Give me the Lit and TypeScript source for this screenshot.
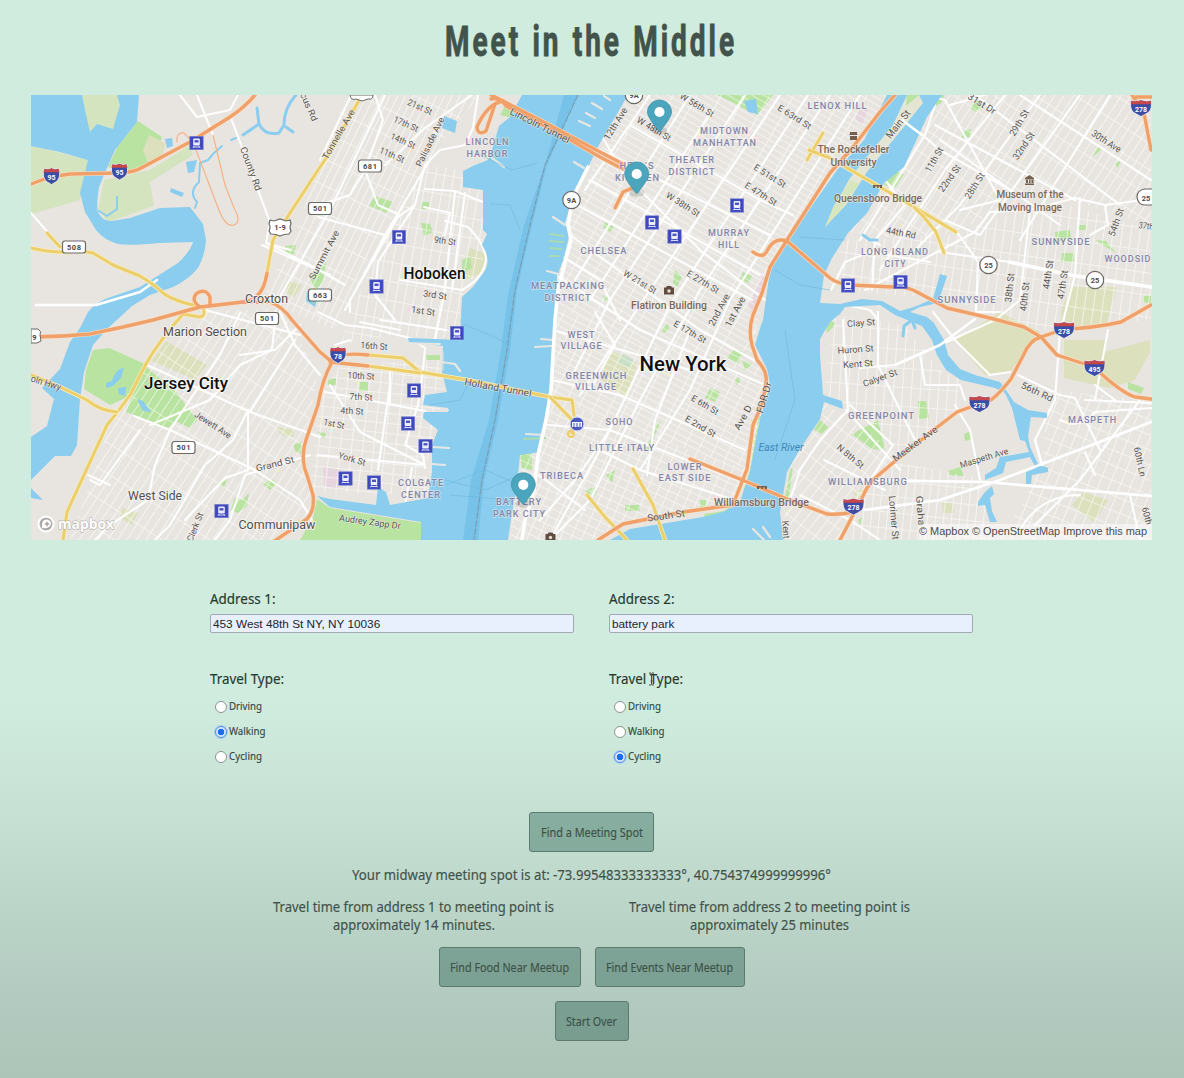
import { LitElement, html, svg, css } from "lit";
import { customElement, property, state } from "lit/decorators.js";

type Label = [string, number, number, number, number, number];

const WATER = "#8acdee";
const PARK = "#b9e3a0";
const OLIVE = "#dce0bd";

const waters = [
  // Hackensack river
  "M31 95H139L137 122L115 150L107 168L99 187Q96 206 98 212Q103 222 112 221L130 218L160 208L190 207L203 224L206 240Q205 256 198 268Q188 280 173 287L150 295L132 306L118 319L107 329L93 345L84 372L80 399L77 445L71 456L55 456L31 480V437L47 426L54 399L42 388L60 369L70 342L80 328L88 312Q96 302 108 298L140 287L178 263Q190 252 193 242L160 243Q130 246 118 244Q104 240 96 230L85 212L80 193L88 160L60 152L31 146Z",
  // Hudson
  "M522 95L510 117L499 126L492 150L488 160L475 165L463 171V187L483 190V230L487 234L482 245Q492 260 484 272L473 287L462 297L460 340L408 338L409 342L443 346L442 372L447 392L425 395L423 405L448 408V412L424 412L423 418L438 430L432 445V472L428 498L390 505L386 492L378 487L376 505L330 499L317 496L330 507L421 522V540H508L511 519L517 485L520 455L540 452L547 419L551 389L555 320L557 277L563 260L570 233L565 223L573 197L588 167L600 143L628 95Z",
  // East river
  "M887 95L864 140L837 170L790 237L770 270L763 320L761 325L755 345L767 369L770 385L760 419L750 472L740 502L723 512L703 517L630 529L610 540H783L780 512L787 472L800 449L820 419L824 402L843 409L842 401L823 395L820 355V339L830 322L840 314L845 307L880 305L895 315L912 322L922 326L932 340L937 355L946 370L961 380L995 388L1005 393L1012 408L1020 440L1025 441L1029 452L1000 457L996 468L985 475V480L1003 473L1006 462L1030 457L1036 468L1026 472V484H1031L1032 475L1048 472V468L1038 464L1030 447L1028 436L1031 417L1047 418V413L1028 410L1014 402L1006 390L1000 382L975 375L960 369L948 355L944 340L934 323L927 317L910 312L920 307L938 303L947 276L940 274L933 299L914 307L900 311L882 301L862 299L840 304L820 303L824 275L832 258L848 233L867 213L884 183L904 167L927 117L942 95Z",
  "M985 492L992 486L994 494L990 498L992 511L997 522H990L985 505L978 506V502Z",
  "M165 139L172 138L173 146L167 148Z M186 162L197 160L194 172L188 173Z M171 188L184 193L182 197L170 192Z M31 488L43 500L31 498Z M444 116L457 121L455 133L442 128Z M307 291L318 296L315 307L306 301Z M112 381Q116 368 124 368L121 378L113 386L106 388V383Z M137 399L143 401L151 412L143 411Z M744 101L756 99L758 114L748 112Z M118 388L126 387L125 396L119 394Z"
];

const parks: [string, string][] = [
  ["M82 95L90 132L98 128L113 129L120 105L117 95Z", "#d3e4bf"],
  ["M31 145L60 153L90 160L80 200L31 214Z", "#d3e4bf"],
  ["M138 121L162 137L152 163L128 172L108 167L118 146Z", PARK],
  ["M149 135L165 143L163 156L148 163L143 150Z", OLIVE],
  ["M104 180L150 170L190 145L193 155L150 182L154 206L108 222L98 210Z", "#d3e4bf"],
  ["M93 350L109 348L145 364L132 395L110 405L84 389L86 370Z", PARK],
  ["M144 365L176 392L197 420L190 428L175 421L168 428L126 412Z", PARK],
  ["M166 341L207 365L195 380L152 361Z", OLIVE],
  ["M330 508L421 523V540H300L313 518L317 499Z", PARK],
  ["M500 115L512 118L518 106L506 104Z", PARK],
  ["M375 196L393 202L387 213L369 206Z", PARK],
  ["M421 223L430 224L433 232L424 236Z M422 202H429V209H421Z M326 262L310 277L315 290L323 282Z", PARK],
  ["M470 248L486 254Q490 265 480 274L462 281L465 258Z", OLIVE],
  ["M462 260L470 257L472 268L462 273Z", PARK],
  ["M717 95H773L758 115Q745 110 736 104Z", PARK],
  ["M563 240L569 234L563 262H558Z M520 453L532 452V470L522 468Z M535 371L547 368L546 379L537 380Z", PARK],
  ["M610 350L637 363L628 397L600 381Z", OLIVE],
  ["M623 354L634 360L629 368L617 362Z", "#c7dfc4"],
  ["M710 388L720 392L715 402L705 398Z M742 360L752 364L745 370Z M737 350L745 352L737 362L728 356Z", PARK],
  ["M759 415L762 417L756 475L744 500L740 501L750 470Z M704 514L724 511L740 500L744 503L727 516L705 519Z", PARK],
  ["M743 272L752 276L748 283L740 279Z M675 270L682 277L677 287L673 283Z", PARK],
  ["M856 432L878 420L885 450L872 449L853 435Z", PARK],
  ["M820 420L828 427L822 434L814 430Z M825 316L836 324L827 333Z M790 470L793 466L789 497H785Z", PARK],
  ["M888 168L904 174L895 188L884 185Z M929 110L941 103L945 94L930 96L925 107Z", PARK],
  ["M955 340L1000 312L1040 332L1025 355L1010 372L985 375Z", OLIVE],
  ["M1061 312L1070 287H1117L1106 326L1062 330Z", OLIVE],
  ["M1064 340L1108 340L1104 352L1150 340V352L1135 380L1110 388L1064 378Z", OLIVE],
  ["M1128 382L1144 388L1141 394L1128 389Z", PARK],
  ["M1072 505L1083 492L1108 500L1094 522Z", OLIVE],
  ["M918 401H926L929 418L919 419Z M964 434L971 431L972 439L965 441Z M948 471L960 467L964 476L950 475Z", PARK],
  ["M1055 232L1070 230L1071 240L1056 241Z M1062 253H1074V262H1061Z M1096 240L1106 241L1116 253L1104 246Z M1078 225H1086V230H1078Z", PARK],
  ["M970 108L976 100L983 106L976 112Z M962 131L971 129L970 137L961 138Z M1115 164L1121 160L1118 168Z M1092 157L1099 145L1101 150Z M1144 302V296L1151 295V304Z", PARK],
  ["M242 500L249 493L247 506L238 513L231 510L235 497Z M263 484L272 479L277 483L270 490Z M216 484L227 480L224 487Z M293 445L301 442L303 454L296 452Z M285 246L296 245L294 254L286 255Z", PARK],
  ["M122 508L138 513L132 525L120 518Z M288 281L302 285L294 297L286 293Z M276 427L295 430L293 437L281 435Z", OLIVE],
  ["M853 492L862 489L866 495L857 499Z M942 503H953L954 513H943Z", OLIVE],
  ["M328 380L336 378V385H328Z M360 382H368V391H359Z M318 432L326 433L324 439Z M426 355H440V360H427Z M462 316L473 318L472 323L460 321Z", PARK],
  ["M323 467L342 470L338 489L324 486Z M762 275L768 278L760 300L752 312L748 307Z M858 105L868 110L862 125L856 119Z", "#e6d5dd"],
  ["M858 520L862 517L860 526Z M700 500H706V507H700Z M625 505H640V511H625Z M586 490L595 487L597 494L588 497Z M606 475L615 470L612 483Z", PARK],
  ["M657 425L661 420L649 450L646 448Z M605 222L614 227L610 232L603 227Z M732 352L736 348L742 354L738 364L728 358Z M735 380L739 377L740 382L736 385Z M603 295L608 298L605 302Z M662 330L668 323L669 329L664 333Z", PARK]
];

// clip outline, angle, across spacing, along spacing
const grids: [string, number, number, number][] = [
  ["M628 95H890L760 300L755 345L767 380L690 352L640 345L556 305L565 225Z", 30, 21, 6],
  ["M556 305L640 345L690 352L768 384L750 470L690 450L630 430L550 395Z", 27, 14, 6],
  ["M550 395L630 430L750 470L735 505L620 525L600 540H510L520 455L540 452Z", 24, 10, 8],
  ["M425 165L462 170L483 190V260L460 300V340L395 335L340 345L380 240Z", 10, 9, 19],
  ["M345 95H480L425 165L375 245L335 330L262 300L300 220Z", 26, 7, 24],
  ["M340 365L440 360L445 390L425 470L430 495L310 492L318 400Z", 6, 11, 10],
  ["M205 312L280 308L318 372L305 445L312 510L275 540H70L110 425L150 360Z", 33, 8, 26],
  ["M945 95H1151V225L1040 190L960 230L915 240L850 232Z", 33, 8, 22],
  ["M840 240L950 235L1050 200L1151 230V320L1040 330L950 300L835 290Z", 8, 9, 22],
  ["M835 315L905 325L940 370L960 380L957 412L930 435L900 455L850 405L822 400Z", 4, 9, 19],
  ["M822 400L900 455L862 500L845 540H783L787 472Z", 38, 9, 20],
  ["M860 480L895 462L980 478L992 540H845Z", 6, 8, 16],
  ["M1050 390L1151 400V540H1000L1040 470Z", 22, 10, 14]
];

const whiteMajor = [
  "M180 95L197 117L230 110L238 95 M197 95L213 135 M231 118L270 222L266 243L290 250 M31 213L50 235 M36 305L96 305L140 292L157 280",
  "M266 243L310 265L345 285 M320 160L368 60 M278 300L330 210L385 95 M262 245L300 262L330 275",
  "M375 95L383 120L365 170L378 205L400 215 M365 170L350 195L320 205 M385 165L425 128L472 95 M425 165L440 150L465 145L473 128L478 95",
  "M425 165L415 205L398 217L350 300L350 312 M415 205L378 262L375 295L395 320 M318 217L385 235L345 310 M385 235L430 160",
  "M425 189L455 191L483 202 M424 207L450 213L445 235 M445 221L468 227Q486 245 486 260Q484 275 470 285L462 290L400 280 M455 191L445 290L435 340 M400 330L360 322 M380 320L446 330 M465 193L452 290",
  "M318 312L345 325L370 328L410 338L425 348L423 370L418 405L405 445L423 455L425 468 M390 405V370 M325 392L425 411 M318 455L425 465 M390 385L378 470 M330 385L360 432L425 465 M412 468L405 505 M350 340L335 345",
  "M588 167L573 197L568 225L571 240L563 270L558 290L555 320L551 390L546 420L538 455L534 490L525 520L522 540",
  "M134 416L170 430L255 470L300 500L312 520 M147 365L180 380L250 412L320 437 M240 313L220 355L170 430L155 465L148 500L110 525L95 540 M248 410L233 440L205 465L170 525L155 540 M248 410L248 470L225 478L185 520 M240 355L275 350L300 325",
  "M276 312L272 350L240 365L210 400L150 425 M295 340L250 412 M245 475L310 455 M245 475L230 520L215 540 M140 430L100 485L90 480 M88 475L110 485 M320 375L295 345L280 312 M205 310L300 335",
  "M586 110L625 175L700 250L765 300 M630 125L760 200L793 215 M600 150L770 235 M590 180L760 275 M577 205L752 300 M566 232L700 330L757 362 M556 275L640 330L765 385 M553 330L690 370",
  "M860 95L730 300L690 390L640 470 M830 95L700 290L640 400L590 500 M808 95L670 305L600 450L550 540 M780 95L640 305L580 395 M745 95L610 300L570 380 M690 95L575 280 M712 110L590 300 M650 95L585 190",
  "M551 380L620 395L745 450 M548 425L610 430L750 485 M610 430L575 480L540 520 M600 450L640 470L735 500 M539 475L585 510 M590 500L550 540 M647 475L655 420L690 330 M620 320L600 280L560 255 M595 312L615 345L590 390",
  "M935 105L925 135L860 240 M905 120L940 150L1010 190 M925 95L945 100L1000 200L960 210 M935 125L1075 200 M940 140L1060 225 M975 95L1120 205 M1020 95L1151 180 M1110 95L1020 240 M1080 95L980 235L945 220 M1040 95L960 205L915 250 M1005 95L945 170L880 270 M950 105L985 95",
  "M957 232L978 262L976 312L1000 312 M940 252L1010 262L1070 275L1151 287 M865 290L975 232L990 212L1030 210L1075 198L1105 205L1151 199 M1080 198L1075 275L1062 325 M1105 205L1108 225L1090 235 M1030 210L1020 300L995 320L940 345L895 365L860 368 M885 180L905 205L875 240L872 290",
  "M933 312L955 340L990 375L1010 372 M920 355L925 385L960 385L965 400 M878 312V365L900 410L915 440",
  "M843 320L848 410L820 440L800 470L790 500 M850 405L893 445L870 480 M824 460L885 490 M800 495L850 520L880 540 M864 480L985 482L1151 496 M864 510L940 500L1000 480L1110 438L1151 422 M970 430L980 480 M955 405L970 430",
  "M1060 330L1055 400L1035 440L1042 465 M1018 375L1060 395L1075 398L1100 450 M1108 330L1095 400 M1085 400L1151 403 M1060 420Q1080 430 1095 412L1151 408 M1140 400L1080 480L1035 525 M1085 452L1095 475 M1130 495L1140 540 M1080 495Q1040 495 1020 530 M1095 385L1115 400",
  "M845 305L870 310L878 320 M831 290L845 262L870 252L930 262 M862 235L880 245 M846 410L900 470"
];

const boundary = "M578 95L545 165L530 225L515 290L507 350L495 420L482 480L474 540";

const yellow = [
  "M31 248Q60 255 75 250L93 253L113 265L140 276Q155 285 163 293Q175 302 203 307Q206 316 200 317L183 314Q160 340 147 362L130 395Q118 412 107 425L67 512L63 540",
  "M47 233L60 247", "M31 375L60 387L87 400Q100 411 117 412",
  "M267 273L273 240L290 213L320 167L327 157L362 95",
  "M368 355L403 358L420 372L467 380L550 397L572 400L574 415", "M368 366L420 373", "M550 397L572 420L572 433",
  "M807 160L823 133", "M809 150L830 158L880 187L914 207L956 232", "M914 207L924 217L936 232L944 253",
  "M633 469L653 505L665 540", "M587 495L605 517L627 540"
];

const orange = [
  "M31 184L50 177L70 174L120 173Q135 172 143 167L190 142L230 117Q245 107 255 95",
  "M31 337Q60 337 90 334L123 327L153 320L200 307L243 302L270 302Q282 306 292 320L320 352L332 362Q322 380 318 405L306 440Q300 458 307 475L313 495Q315 510 307 519L273 542",
  "M200 307Q190 300 197 293Q206 288 210 297V306", "M243 302Q263 300 267 273",
  "M330 360Q340 352 368 355", "M330 362L368 366",
  "M491 95L503 101L540 120L600 152L623 164", "M491 99Q500 97 506 106L560 134L600 157L623 169",
  "M503 101Q487 104 477 127Q478 136 486 131L495 104",
  "M615 208L623 192L632 188",
  "M895 95L880 112L853 147L830 173L787 240L770 267L762 293L753 315Q748 330 752 345L757 360Q768 372 766 382L763 402L753 425L747 469L733 505L683 512L623 524L598 540",
  "M753 252Q764 260 768 249Q775 237 787 241L830 278Q838 284 850 285L894 287Q906 286 917 292L947 308L990 318L1024 327L1041 337L1057 355L1094 367Q1120 392 1135 397L1151 399",
  "M1151 305L1121 322Q1095 328 1064 329L1041 337Q1030 340 1024 354L1011 379Q1000 393 991 400Q970 407 957 412L931 432L894 462L874 479Q866 488 864 494L840 540",
  "M1132 95L1144 113L1151 150", "M1136 97H1151",
  "M690 459L740 479L787 499L827 514Q840 515 853 512"
];

const hood: Label[] = [
  ["LINCOLN", 487.5, 145, 9.5, 0, 44], ["HARBOR", 487.5, 156.5, 9.5, 0, 42], ["MIDTOWN", 724.5, 134, 9.5, 0, 49],
  ["MANHATTAN", 725, 145.5, 9.5, 0, 64], ["THEATER", 692, 163, 9.5, 0, 46], ["DISTRICT", 692, 174.5, 9.5, 0, 47],
  ["HELL'S", 637, 169, 9.5, 0, 35], ["KITCHEN", 637.5, 181, 9.5, 0, 45], ["LENOX HILL", 837.5, 109, 9.5, 0, 60],
  ["CHELSEA", 604, 254, 9.5, 0, 47], ["MURRAY", 729, 236, 9.5, 0, 42], ["HILL", 729, 247.5, 9.5, 0, 22],
  ["MEATPACKING", 568, 289, 9.5, 0, 74], ["DISTRICT", 568, 300.5, 9.5, 0, 47], ["WEST", 581.5, 337.5, 9.5, 0, 28],
  ["VILLAGE", 581.5, 349, 9.5, 0, 42], ["GREENWICH", 596.5, 378.5, 9.5, 0, 62], ["VILLAGE", 596, 390, 9.5, 0, 42],
  ["SOHO", 619.5, 425, 9.5, 0, 28], ["LITTLE ITALY", 622, 451, 9.5, 0, 66], ["TRIBECA", 562, 479, 9.5, 0, 44],
  ["LOWER", 685, 469.5, 9.5, 0, 35], ["EAST SIDE", 685, 481, 9.5, 0, 53], ["COLGATE", 421, 486, 9.5, 0, 46],
  ["CENTER", 421, 498, 9.5, 0, 40], ["BATTERY", 519, 505, 9.5, 0, 46], ["PARK CITY", 519.5, 516.5, 9.5, 0, 53],
  ["LONG ISLAND", 895, 255, 9.5, 0, 68], ["CITY", 895.5, 266.5, 9.5, 0, 22], ["SUNNYSIDE", 1061, 244.5, 9.5, 0, 59],
  ["SUNNYSIDE", 967, 302.5, 9.5, 0, 59], ["WOODSID", 1128, 262, 9.5, 0, 47], ["GREENPOINT", 881.5, 419, 9.5, 0, 67],
  ["MASPETH", 1092.5, 423, 9.5, 0, 49], ["WILLIAMSBURG", 868, 485, 9.5, 0, 80]
];

const towns: Label[] = [
  ["Croxton", 266.5, 303, 12, 0, 43], ["Marion Section", 205, 335.5, 12, 0, 84],
  ["West Side", 155, 500, 12, 0, 54], ["Communipaw", 277, 528.5, 12, 0, 77]
];

const cities: Label[] = [
  ["Hoboken", 434.5, 279, 16, 0, 62], ["Jersey City", 186, 389, 16, 0, 84], ["New York", 683, 370.5, 20, 0, 87]
];

const poi: Label[] = [
  ["The Rockefeller", 853.5, 153, 10, 0, 72], ["University", 853.5, 166, 10, 0, 46], ["Queensboro Bridge", 878, 202, 10, 0, 88],
  ["Museum of the", 1030, 198, 10, 0, 67], ["Moving Image", 1030, 211, 10, 0, 64], ["Flatiron Building", 669, 308.5, 10, 0, 76],
  ["Williamsburg Bridge", 761.5, 505.5, 10, 0, 95]
];

const streets: Label[] = [
  ["21st St", 420, 110, 9, 24, 26], ["17th St", 406, 127, 9, 24, 26], ["14th St", 403, 144, 9, 24, 26], ["11th St", 392, 158, 9, 24, 26],
  ["Palisade Ave", 430, 145, 9, -64, 54], ["Tonnelle Ave", 338.5, 137.5, 9, -60, 56], ["County Rd", 251, 172, 9.5, 70, 46],
  ["cus Rd", 309, 110, 9, 66, 30], ["Summit Ave", 324, 258, 9, -62, 54], ["9th St", 445, 244, 9, 8, 22], ["3rd St", 435, 298, 9, 8, 24],
  ["1st St", 423, 314, 9, 8, 24], ["16th St", 374, 349, 9, 4, 27], ["10th St", 361, 379, 9, 3, 27], ["7th St", 361, 400, 9, 3, 23],
  ["4th St", 352, 414, 9, 3, 23], ["1st St", 334, 427, 9, 12, 21], ["York St", 352, 462, 9, 16, 28], ["Audrey Zapp Dr", 370, 525, 9, 8, 62],
  ["Jewett Ave", 213, 428, 9, 33, 42], ["Grand St", 275, 467, 9, -14, 39], ["Clerk St", 195, 530, 9, -68, 30], ["oln Hwy", 46, 386, 9.5, 17, 31],
  ["Lincoln Tunnel", 540, 129, 10, 27, 66], ["Holland Tunnel", 498, 391, 10, 10, 68], ["W 56th St", 697, 108, 9, 31, 38],
  ["W 48th St", 654, 132, 9, 31, 38], ["12th Ave", 615.5, 127, 9.5, -58, 36], ["W 38th St", 683, 207.5, 9, 32, 38], ["E 63rd St", 794.5, 120, 9, 32, 38],
  ["E 51st St", 770, 179, 9, 32, 36], ["E 47th St", 761, 197, 9, 32, 36], ["W 21st St", 640, 285, 9, 31, 37], ["E 27th St", 703, 285, 9, 31, 36],
  ["2nd Ave", 719, 313, 9.5, -62, 35], ["1st Ave", 735, 315, 9.5, -62, 33], ["E 17th St", 690, 335, 9, 30, 36], ["E 6th St", 705, 408, 9, 30, 30],
  ["E 2nd St", 700.5, 429.5, 9, 30, 34], ["Ave D", 743, 421, 9.5, -61, 27], ["FDR Dr", 764, 401, 10, -73, 32], ["South St", 666, 519, 9.5, -8, 38],
  ["Main St", 898, 127.5, 10, -52, 33], ["31st Dr", 982, 107, 9.5, 32, 31], ["11th St", 934, 163, 9.5, -60, 27], ["22nd St", 949.5, 181.500, 9.5, -54, 31],
  ["28th St", 974.5, 189, 9.5, -57, 29], ["29th St", 1019, 126, 9.5, -59, 29], ["32nd St", 1023.500, 149, 9.5, -56, 31], ["30th Ave", 1106.500, 144.500, 9.5, 33, 33],
  ["44th Rd", 901, 236, 9, 11, 30], ["38th St", 1009.5, 291, 9.5, -84, 29], ["40th St", 1024.5, 300, 9.5, -84, 29], ["44th St", 1048, 278, 9.5, -82, 29],
  ["47th St", 1062.5, 288, 9.5, -82, 29], ["54th St", 1116, 225.500, 9.5, -70, 29], ["37th", 1146, 229, 9, 8, 15], ["Clay St", 861, 326, 9, -4, 28],
  ["Huron St", 855.500, 352.500, 9, -4, 36], ["Kent St", 858, 367, 9, -4, 30], ["Calyer St", 880, 381, 9, -20, 36], ["N 8th St", 850.5, 459.500, 9, 40, 32],
  ["Meeker Ave", 915, 447, 9.5, -36, 53], ["Maspeth Ave", 984, 461, 9, -17, 50], ["56th Rd", 1037, 395, 9.5, 25, 34],
  ["Lorimer St", 894, 521, 9.5, 85, 44], ["Graha", 920.500, 514, 9.5, 85, 30], ["Kent", 786, 533, 9.5, 86, 18],
  ["60th Ln", 1140, 465, 9, 78, 30], ["60th", 1147, 519, 9, 75, 18]
];

const stations = [[196.5, 143], [399, 237], [376.5, 286.5], [457, 333], [414, 390.5], [408, 423.5], [425.5, 446], [345.5, 478.5], [374, 482.5], [221.5, 511], [652, 222.5], [674.5, 236.5], [737, 205.5], [848, 285.5], [900.5, 282]];
const interstates: [string, number, number][] = [["95", 51.5, 176], ["95", 119.5, 171.5], ["78", 338, 355], ["278", 1141, 108], ["278", 1064, 330], ["495", 1094.5, 368], ["278", 979.5, 404], ["278", 853.5, 506.5]];
const boxes: [string, number, number][] = [["508", 74, 247], ["681", 370, 166], ["501", 320, 208.5], ["663", 320, 295], ["501", 267, 318.5], ["501", 183.5, 447.5]];
const rounds: [string, number, number][] = [["9A", 571.5, 200], ["25", 988.5, 265], ["25", 1095, 280], ["9A", 634, 95]];
const pins = [[647.5, 100], [624.7, 162], [511.3, 472.8]];

const drawLabels = (items: Label[], cls: string) =>
  items.map(([t, x, y, size, rot, w]) => svg`<text class=${cls} x=${x} y=${y} font-size=${size} textLength=${w}
    lengthAdjust="spacingAndGlyphs" transform=${`rotate(${rot} ${x} ${y - size * 0.35})`}>${t}</text>`);

@customElement("city-map")
class CityMap extends LitElement {
  static styles = css`
    :host { display: block; height: 445px; overflow: hidden; }
    .map { display: block; width: 100%; height: 100%; }
    text { text-anchor: middle; font-family: Roboto, "Noto Sans", sans-serif; paint-order: stroke; stroke-linejoin: round; }
    .hood { fill: #8386a8; stroke: #f3f1f0; stroke-width: 1.6px; stroke-opacity: .6; font-weight: 500; letter-spacing: 1px; }
    .town { fill: #504f50; stroke: #f6f4f2; stroke-width: 1.8px; }
    .city { fill: #101010; stroke: #fff; stroke-width: 1.6px; stroke-opacity: .8; font-weight: 500; }
    .poi { fill: #7b695c; stroke: #f4f1ee; stroke-width: 1.6px; stroke-opacity: .6; font-weight: 500; }
    .street { fill: #595652; stroke: #f5f3f0; stroke-width: 1.4px; stroke-opacity: .6; }
    .river { fill: #4187b8; font-style: italic; }
    .badge { fill: #4c4a4a; font-weight: 700; font-size: 7.5px; }
    .route { fill: #fff; font-weight: 700; font-size: 7px; }
    .brand { fill: #fff; stroke: #aaa7a3; stroke-width: 1px; font-weight: 700; text-anchor: start; font-family: "Open Sans", sans-serif; }
    .credit { fill: #4b4b4a; text-anchor: start; font-family: "Liberation Sans", Arial, sans-serif; font-size: 11.5px; }
    .line { fill: none; stroke-linejoin: round; stroke-linecap: round; }
  `;

  render() {
    return html`<svg class="map" viewBox="31 95 1121 445" preserveAspectRatio="none">
      <defs>${grids.map(([, a, w, h], i) => svg`<pattern id=${"g" + i} width=${w} height=${h} patternUnits="userSpaceOnUse" patternTransform=${`rotate(${a})`}>
        <path d=${`M0 0H${w}M0 0V${h}`} stroke="#fff" stroke-width="1.7" fill="none"></path></pattern>`)}</defs>
      <rect x="31" y="95" width="1121" height="445" fill="#e8e5e0"></rect>
      ${parks.map(([d, c]) => svg`<path d=${d} fill=${c}></path>`)}
      ${grids.map(([d], i) => svg`<path d=${d} fill=${`url(#g${i})`} opacity=".68"></path>`)}
      ${whiteMajor.map(d => svg`<path class="line" d=${d} stroke="#fff" stroke-width="2.1" opacity=".95"></path>`)}
      ${waters.map(d => svg`<path d=${d} fill=${WATER}></path>`)}
      <path d="M564 95L545 165L524 225L508 295L501 350L489 420L471 480L463 540H478L484 480L498 420L510 350L517 290L532 225L547 165L578 95Z" fill="#6bbbe6" opacity=".6"></path>
      <path class="line" d=${boundary} stroke="#7b9db0" stroke-width="1.2" stroke-dasharray="6 2"></path>
      <path d="M82 95L86 115L90 132L97 124L113 129L120 105L117 95Z" fill="#d3e4bf"></path>
      <path d="M907 95H919L923 103L903 128L867 172L846 205L825 227L835 205L850 178L866 158L893 125Z" fill="#e4e6d3"></path>
      <path d="M851 180L859 184L840 211L825 227L834 205Z" fill="#d8e6bd"></path>
      <path d="M907 95H919L906 106Z" fill="#b9e3a0"></path>
      <g class="line" stroke=${WATER} stroke-width="3">
        <path d="M296 95Q284 108 284 125L279 133Q265 136 259 124L257 108M259 124L243 135M286 127L293 132"></path>
        <path d="M236 138L231 140M222 146L214 153L208 160L200 163L199 182Q188 192 197 202L195 208M117 197L117 209L107 216L99 211" stroke-width="2"></path>
        <path d="M863 235L870 240H877"></path><path d="M912 320L904 326L903 336M912 320L915 328"></path>
      </g>
      <g class="line" stroke="#e8e6e1" stroke-width="2.2">
        <path d="M492 158L504 167M441 362L455 364L460 371M445 410H448M433 447L449 448M432 464L445 465M400 343L440 344M595 118L586 113M590 126L579 121M602 109L592 103M610 100L604 96M574 162L584 168M565 225L553 217M562 275L547 271M553 340L541 339M551 346L535 347M547 435L526 434M753 529L764 540M763 527L770 537"></path>
        <path stroke="#a9dcae" d="M563 236L550 234M563 242L550 241M561 249L550 248M559 256L550 256M545 438L524 439"></path>
        <path d="M441 365V391M443 352V370" stroke-width="1"></path>
      </g>
      <path class="line" stroke="#6cb8df" stroke-width=".8" opacity=".7" d="M480 155L512 170L537 163M490 204L510 205L520 230M465 325L490 335L510 345M430 405L460 400L470 380M445 480L485 490L520 475M445 485L485 470L520 485M450 495L510 500M775 270L800 285L830 290M800 237L845 240M785 330L795 400L775 460"></path>
      <path class="line" stroke="#fff" stroke-width="3.6" d="M588 167L573 197L568 225L571 240L563 270L558 290L555 320L551 390L546 420L538 455L534 490L525 520L522 540M1010 262L1070 275L1151 287"></path>
      <path class="line" stroke="#fff" stroke-width="2.6" d="M36 305L96 305L140 292L157 280M864 510L940 500L1000 480L1110 438L1151 422M864 480L985 482L1151 496M902 120L922 135M1042 465L1035 440M975 319L940 345L895 365"></path>
      <path class="line" stroke="#f5b084" stroke-width="1.1" d="M177 142Q176 132 184 133Q190 138 196 150L217 205Q225 228 234 225Q242 222 234 208L225 185L213 135"></path>
      ${yellow.map(d => svg`<path class="line" d=${d} stroke="#f8eec0" stroke-width="4.4"></path><path class="line" d=${d} stroke="#ecce6b" stroke-width="3"></path>`)}
      ${orange.map(d => svg`<path class="line" d=${d} stroke="#fae0c8" stroke-width="4.6"></path>`)}
      ${orange.map(d => svg`<path class="line" d=${d} stroke="#f0a169" stroke-width="3.4"></path>`)}
      ${drawLabels(streets, "street")}${drawLabels(hood, "hood")}${drawLabels(poi, "poi")}
      <text class="river" x="781" y="450.5" font-size="10.5" textLength="45" lengthAdjust="spacingAndGlyphs">East River</text>
      ${drawLabels(towns, "town")}${drawLabels(cities, "city")}
      <g fill="#74604f">
        <path d="M850 132H857V134L858 135H849L850 134ZM850 136H857V140H850Z"></path>
        <path d="M873 185H882V188H880V186.500H878.500V188H877V186.500H875V188H873ZM757 486H767V489H765V487.500H763V489H761.500V487.500H759V489H757Z"></path>
        <path d="M1029.500 175L1034 178V179.500H1025V178ZM1026 180H1028V183H1026ZM1029 180H1030.500V183H1029ZM1031.500 180H1033.500V183H1031.500ZM1025 183.500H1034V185H1025Z"></path>
      </g>
      ${[[669, 290.5], [550.5, 537]].map(([x, y]) => svg`<g transform=${`translate(${x} ${y})`}><path d="M-5 -3H-3L-2 -4.500H2L3 -3H5V4H-5Z" fill="#604d40"></path><circle r="1.700" cy=".5" fill="#e9dfd5"></circle></g>`)}
      ${stations.map(([x, y]) => svg`<g transform=${`translate(${x} ${y})`}>
        <rect x="-6.700" y="-6.700" width="13.400" height="13.400" fill="#3f49bd" stroke="#7981d3" stroke-width=".6"></rect>
        <rect x="-3.300" y="-4.500" width="6.600" height="7" rx="1" fill="#eceefe"></rect><rect x="-2" y="-2.900" width="4" height="2.400" fill="#4a54c5"></rect>
        <path d="M-2.500 3L-3.500 4.800M2.500 3L3.500 4.800M-3 4H3" stroke="#eceefe" stroke-width=".9"></path></g>`)}
      <g transform="translate(577 424)"><circle r="7" fill="#4a59c0" stroke="#dfe3f5"></circle><path d="M-5 -2H5V3H-5Z" fill="#f4f5fc"></path><path d="M-3 -1V3M0 -1V3M3 -1V3" stroke="#4a59c0"></path></g>
      <circle cx="571" cy="434" r="3" fill="none" stroke="#ecce6b" stroke-width="2"></circle>
      ${interstates.map(([t, x, y]) => svg`<g transform=${`translate(${x} ${y})`}>
        <path d=${t.length > 2 ? "M-10 -7.500Q-5 -6 0 -8Q5 -6 10 -7.500Q11.500 0 8 4Q4 6.500 0 8.500Q-4 6.500 -8 4Q-11.500 0 -10 -7.500Z" : "M-7 -7.500Q-3 -6 0 -8Q3 -6 7 -7.500Q10 1 5 5.500L0 8.500L-5 5.500Q-10 1 -7 -7.500Z"} fill="#3b4da4" stroke="#f1eef0" stroke-width=".8"></path>
        <path d=${t.length > 2 ? "M-10 -7.200Q-5 -5.700 0 -7.700Q5 -5.700 10 -7.200V-3.800H-10Z" : "M-7 -7.200Q-3 -5.700 0 -7.700Q3 -5.700 7 -7.200L8 -3.800H-8Z"} fill="#c7474a"></path>
        <text class="route" x="0" y="3.600">${t}</text></g>`)}
      ${boxes.map(([t, x, y]) => svg`<rect x=${x - 11.5} y=${y - 6} width="23" height="12" rx="2.500" fill="#fff" stroke="#6b6966" stroke-width="1.200"></rect><text class="badge" x=${x} y=${y + 2.8} textLength="14">${t}</text>`)}
      ${rounds.map(([t, x, y]) => svg`<circle cx=${x} cy=${y} r="8.700" fill="#fff" stroke="#6b6966" stroke-width="1.200"></circle><text class="badge" x=${x} y=${y + 2.8}>${t}</text>`)}
      <path d="M270 220L274 221L280 219L286 221L290 220L291 224Q289 227 291 231L289 234Q284 234 280 236Q276 234 271 234L269 231Q271 227 269 224Z" fill="#fff" stroke="#6b6966" stroke-width="1.200"></path>
      <text class="badge" x="280" y="230">1-9</text>
      <path d="M31 329H38Q42 331 40 335L41 341L37 343H31Z" fill="#fff" stroke="#6b6966"></path><text class="badge" x="34.500" y="339.500">9</text>
      <path d="M350 95Q351 101 356 99L362 101L368 99Q373 100 373 95Z" fill="#fff" stroke="#6b6966"></path>
      <path d="M1154 189H1145Q1137 190 1137 197Q1138 205 1145 205H1154Z" fill="#fff" stroke="#6b6966" stroke-width="1.200"></path><text class="badge" x="1146" y="200.500">25</text>
      ${pins.map(([x, y]) => svg`<g transform=${`translate(${x} ${y}) scale(.89)`}>
        <ellipse cx="13.500" cy="34.500" rx="9" ry="4.500" fill="#000" opacity=".13"></ellipse>
        <path d="M27 13.500C27 19.070 20.250 27 14.750 34.500C14.020 35.500 12.980 35.500 12.250 34.500C6.750 27 0 19.220 0 13.500C0 6.040 6.040 0 13.500 0C20.960 0 27 6.040 27 13.500Z" fill="#4ba5bd" stroke="#3d90a8" stroke-width=".8"></path>
        <circle cx="13.500" cy="13.500" r="5.700" fill="#fff"></circle></g>`)}
      <circle cx="46" cy="524" r="7.600" fill="none" stroke="#fff" stroke-width="2"></circle><circle cx="46" cy="524" r="6.300" fill="#aaa8a4"></circle>
      <path d="M42 528Q41 519 47 519.500Q51 520 51 524Q50 529 42 528Z" fill="#fff"></path><path d="M47 521L48 523L50 524L48 525L47 527L46 525L44 524L46 523Z" fill="#aaa8a4"></path>
      <text class="brand" x="58" y="528.500" font-size="14" textLength="56" lengthAdjust="spacingAndGlyphs">mapbox</text>
      <rect x="919" y="524" width="233" height="16" fill="#fff" opacity=".5"></rect>
      <text class="credit" x="919" y="535.300" textLength="228" lengthAdjust="spacingAndGlyphs">© Mapbox © OpenStreetMap Improve this map</text>
    </svg>`;
  }
}

/** One line of text set to a fixed measure. */
@customElement("fit-text")
class FitText extends LitElement {
  @property() text = "";
  @property({ type: Number }) width = 100;
  @property({ type: Number }) size = 14;
  static styles = css`
    :host { display: block; line-height: 0; }
    .t { display: block; overflow: visible; }
    text { font-family: "Noto Sans", "Open Sans", sans-serif; fill: currentColor; stroke: currentColor; stroke-width: .15px; }
  `;
  render() {
    return html`<svg class="t" width=${this.width} height="18"><text x="0" y="14" font-size=${this.size}
      textLength=${this.width} lengthAdjust="spacingAndGlyphs">${this.text}</text></svg>`;
  }
}

@customElement("travel-form")
class TravelForm extends LitElement {
  @property() n = "1";
  @property() address = "";
  @property() mode = "";
  @property({ type: Boolean }) cursor = false;
  static styles = css`
    :host { display: block; width: 364px; color: #24382f; }
    .field { display: block; box-sizing: border-box; width: 364px; height: 19px; margin: 6px 0 0; padding: 0 2px; border: 1.5px solid #a3a9b3; border-radius: 2px;
      background: #e8f0fe; color: #23262e; font: 11.8px "Liberation Sans", Arial, sans-serif; outline: none; }
    .kind { position: relative; margin-top: 37px; }
    .caret { position: absolute; left: 39px; top: 2px; }
    .options { display: flex; flex-direction: column; gap: 7px; padding: 8px 0 0 5px; }
    .option { display: flex; align-items: center; gap: 2px; height: 18px; color: #33483f; }
    .dot { appearance: none; box-sizing: border-box; width: 12px; height: 12px; margin: 3px 0 0; border: 1px solid #8b9490; border-radius: 50%; background: #fff; }
    .dot:checked { border: 1.5px solid #4c8bee; background: radial-gradient(circle, #1c6cf0 0 3px, #d8e8ff 3.600px); box-shadow: 0 0 0 1px #a9cdf0; }
  `;
  render() {
    const modes: [string, number][] = [["Driving", 33], ["Walking", 36.5], ["Cycling", 33]];
    return html`
      <fit-text .text=${`Address ${this.n}:`} .width=${65.5} .size=${14.5}></fit-text>
      <input class="field" .value=${this.address} />
      <div class="kind">
        <fit-text .text=${"Travel Type:"} .width=${74} .size=${14.5}></fit-text>
        ${this.cursor ? html`<svg class="caret" width="7" height="14"><path d="M1 1H3L3.500 1.500L4 1H6M1 13H3L3.500 12.500L4 13H6M3.500 1.500V12.500M2.500 9H4.500" stroke="#4d4a4a" fill="none"></path></svg>` : ""}
      </div>
      <div class="options">${modes.map(([m, w]) => html`<label class="option">
        <input class="dot" type="radio" name="mode" .checked=${m === this.mode} />
        <fit-text .text=${m} .width=${w} .size=${11}></fit-text></label>`)}</div>`;
  }
}

@customElement("app-root")
class AppRoot extends LitElement {
  @state() private spot = "Your midway meeting spot is at: -73.99548333333333°, 40.754374999999996°";
  static styles = css`
    :host { display: block; }
    .page { box-sizing: border-box; height: 1078px; overflow: hidden; padding: 0 32px 0 31px; display: flex; flex-direction: column; color: #3f524a;
      background: linear-gradient(#d0ecde 0, #d0ecde 700px, #c9e4d7 790px, #bdd6ca 900px, #b2cabf 1000px, #adc5b9 1078px); }
    .title { margin: 0; height: 95px; flex: none; display: flex; justify-content: center; }
    .banner { overflow: visible; }
    .heading { font: 700 42px Roboto, "Noto Sans", sans-serif; letter-spacing: 4.500px; word-spacing: 2px; fill: #41534b; stroke: #41534b; stroke-width: .9px; }
    .map { flex: none; width: 1121px; }
    .forms { display: flex; gap: 35px; margin: 50px 0 0 179px; }
    .actions { display: flex; flex-direction: column; align-items: center; width: 1121px; }
    .row { display: flex; gap: 14px; }
    .button { box-sizing: border-box; height: 40px; padding: 0 10.500px; display: flex; align-items: center; justify-content: center;
      color: #3d5149; background: rgba(28, 88, 70, .37); border: 1.500px solid #5d7a6e; border-radius: 3px; }
    .main { margin-top: 48px; }
    .spot { margin-top: 14px; }
    .times { display: flex; gap: 75px; margin-top: 14px; }
    .time { display: flex; flex-direction: column; align-items: center; }
    .near { margin-top: 13px; }
    .over { margin-top: 13.500px; }
  `;
  private button(label: string, width: number, cls = "") {
    return html`<button class="button ${cls}"><fit-text .text=${label} .width=${width} .size=${12}></fit-text></button>`;
  }
  render() {
    return html`<main class="page">
      <h1 class="title"><svg class="banner" width="294" height="95"><text class="heading" x="0" y="56" textLength="292" lengthAdjust="spacingAndGlyphs">Meet in the Middle</text></svg></h1>
      <city-map class="map"></city-map>
      <section class="forms">
        <travel-form n="1" address="453 West 48th St NY, NY 10036" mode="Walking"></travel-form>
        <travel-form n="2" address="battery park" mode="Cycling" cursor></travel-form>
      </section>
      <section class="actions">
        ${this.button("Find a Meeting Spot", 102, "main")}
        <fit-text class="spot" .text=${this.spot} .width=${479} .size=${13.5}></fit-text>
        <div class="times">
          <div class="time"><fit-text .text=${"Travel time from address 1 to meeting point is"} .width=${281} .size=${13.5}></fit-text>
            <fit-text .text=${"approximately 14 minutes."} .width=${162} .size=${13.5}></fit-text></div>
          <div class="time"><fit-text .text=${"Travel time from address 2 to meeting point is"} .width=${281} .size=${13.5}></fit-text>
            <fit-text .text=${"approximately 25 minutes"} .width=${159} .size=${13.5}></fit-text></div>
        </div>
        <div class="row near">${this.button("Find Food Near Meetup", 119)}${this.button("Find Events Near Meetup", 127)}</div>
        <div class="row over">${this.button("Start Over", 51)}</div>
      </section>
    </main>`;
  }
}
